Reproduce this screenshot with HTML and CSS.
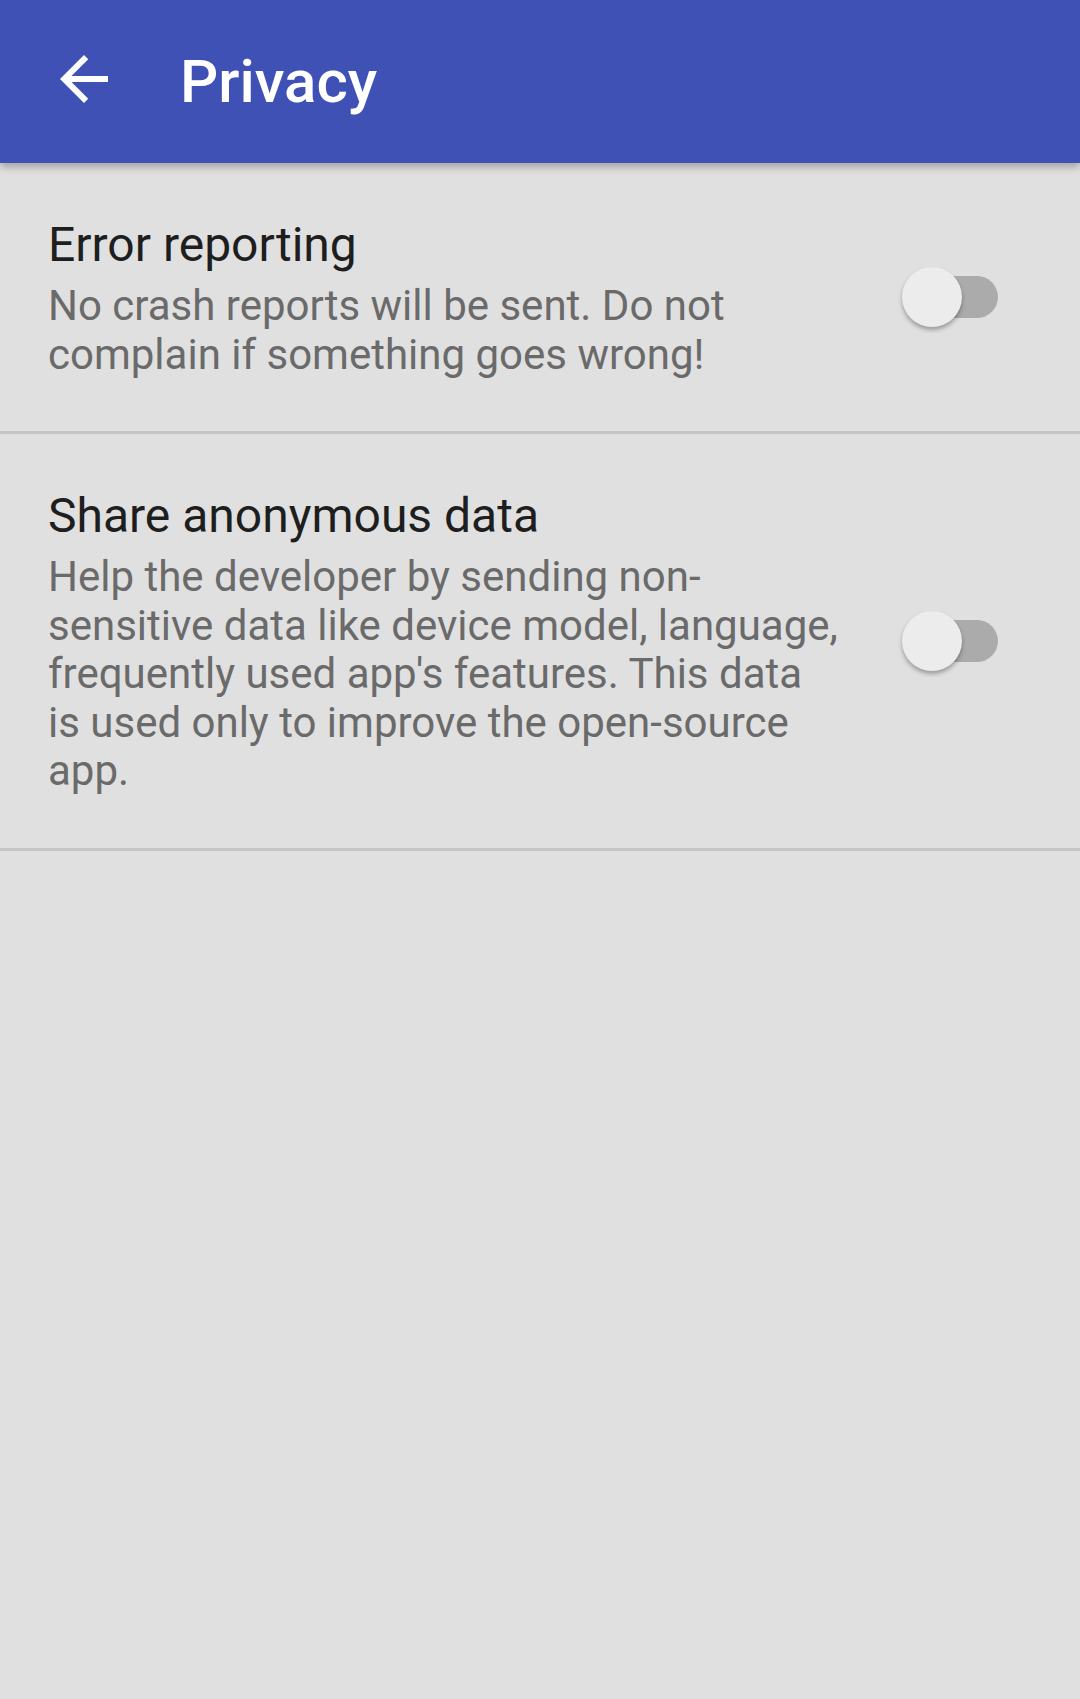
FILE: index.html
```html
<!DOCTYPE html>
<html lang="en">
<head>
<meta charset="utf-8">
<title>Privacy</title>
<link rel="stylesheet" href="styles.css">
</head>
<body>
<div class="screen">
  <header class="appbar">
    <svg class="back" viewBox="0 0 24 24" width="72" height="72" aria-hidden="true">
      <path fill="#ffffff" d="M20 11H7.83l5.59-5.59L12 4l-8 8 8 8 1.41-1.41L7.83 13H20v-2z"/>
    </svg>
    <h1 class="appbar-title">Privacy</h1>
  </header>
  <main class="prefs">
    <section class="pref">
      <div class="pref-text">
        <div class="pref-title">Error reporting</div>
        <div class="pref-summary">No crash reports will be sent. Do not complain if something goes wrong!</div>
      </div>
      <div class="pref-widget">
        <div class="switch">
          <div class="track"></div>
          <div class="thumb"></div>
        </div>
      </div>
    </section>
    <section class="pref">
      <div class="pref-text">
        <div class="pref-title">Share anonymous data</div>
        <div class="pref-summary">Help the developer by sending non-sensitive data like device model, language, frequently used app's features. This data is used only to improve the open-source app.</div>
      </div>
      <div class="pref-widget">
        <div class="switch">
          <div class="track"></div>
          <div class="thumb"></div>
        </div>
      </div>
    </section>
  </main>
</div>
</body>
</html>
```

FILE: styles.css
```css
html, body {
  margin: 0;
  padding: 0;
  background: #e0e0e0;
}

body {
  font-family: Roboto, "Liberation Sans", sans-serif;
}

.screen {
  width: 1080px;
  min-height: 1699px;
  background: #e0e0e0;
}

.appbar {
  height: 163px;
  background: #3f51b5;
  display: flex;
  align-items: center;
  padding-left: 48px;
  box-sizing: border-box;
  box-shadow: 0 4px 8px rgba(0, 0, 0, 0.28);
  position: relative;
  z-index: 1;
}

.back {
  display: block;
  flex: none;
  margin-bottom: 5px;
}

.appbar-title {
  margin: 0 0 0 60px;
  font-size: 60px;
  font-weight: 500;
  line-height: 70px;
  color: #ffffff;
}

.pref {
  display: flex;
  align-items: center;
  border-bottom: 3px solid #c5c5c5;
}

.pref-text {
  width: 792px;
  padding: 54px 0 52px 48px;
  flex: none;
}

.pref-title {
  font-size: 48px;
  line-height: 56px;
  color: #1e1e1e;
}

.pref-summary {
  margin-top: 9px;
  font-size: 42px;
  line-height: 48.5px;
  color: #6a6a6a;
}

.pref-widget {
  flex: 1;
  display: flex;
  justify-content: flex-end;
  padding-right: 82px;
}

.switch {
  position: relative;
  width: 96px;
  height: 60px;
}

.track {
  position: absolute;
  left: 8px;
  top: 9px;
  width: 88px;
  height: 42px;
  border-radius: 21px;
  background: #ababab;
}

.thumb {
  position: absolute;
  left: 0;
  top: 0;
  width: 60px;
  height: 60px;
  border-radius: 50%;
  background: #ececec;
  box-shadow: 0 3px 4px rgba(0, 0, 0, 0.3);
}
```
